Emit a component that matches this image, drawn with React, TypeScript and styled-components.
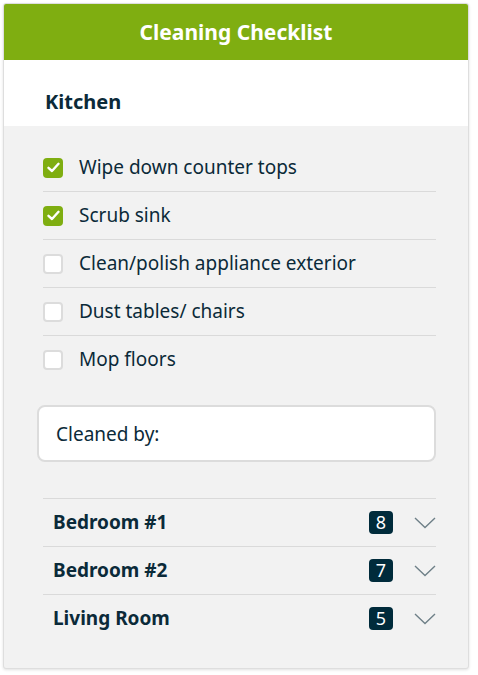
import React from "react";
import styled, { createGlobalStyle } from "styled-components";

const Global = createGlobalStyle`
  html, body { margin: 0; padding: 0; background: #ffffff; }
  body { font-family: "Noto Sans", "Open Sans", sans-serif; color: #0b2a39; }
`;

const Page = styled.div`
  padding: 3px 8px 8px 3px;
`;

const Card = styled.div`
  width: 466px;
  box-sizing: border-box;
  border: 1px solid #dedede;
  border-radius: 3px;
  box-shadow: 0 1px 3px rgba(0, 0, 0, 0.12);
  background: #f2f2f2;
  overflow: hidden;
`;

const Header = styled.div`
  height: 56px;
  background: #7fae11;
  color: #ffffff;
  display: flex;
  align-items: center;
  justify-content: center;
  font-size: 21px;
  font-weight: 700;
`;

const Section = styled.div`
  background: #ffffff;
  padding: 28px 40px 11px 41px;
  font-size: 20px;
  font-weight: 700;
  line-height: 27px;
`;

const Body = styled.div`
  padding: 18px 32px 26px 39px;
`;

const List = styled.div`
  display: flex;
  flex-direction: column;
`;

const Item = styled.label`
  display: flex;
  align-items: center;
  gap: 16px;
  padding: 11px 0;
  line-height: 25px;
  font-size: 19px;
  & + & { border-top: 1px solid #dadada; }
`;

const Box = styled.span<{ $checked: boolean }>`
  width: 20px;
  height: 20px;
  box-sizing: border-box;
  border-radius: 4px;
  flex: none;
  display: flex;
  align-items: center;
  justify-content: center;
  background: ${(p) => (p.$checked ? "#7fae11" : "#ffffff")};
  border: ${(p) => (p.$checked ? "none" : "2px solid #dcdcdc")};
`;

const Field = styled.div`
  margin: 22px 0 36px -6px;
  height: 57px;
  box-sizing: border-box;
  border: 2px solid #dcdcdc;
  border-radius: 8px;
  background: #ffffff;
  display: flex;
  align-items: center;
  padding: 0 17px;
  font-size: 19px;
`;

const Accordion = styled.div`
  display: flex;
  flex-direction: column;
`;

const Panel = styled.div`
  display: flex;
  align-items: center;
  border-top: 1px solid #dadada;
  padding: 11px 0 11px 10px;
  line-height: 25px;
`;

const PanelTitle = styled.span`
  flex: 1;
  font-size: 19px;
  font-weight: 700;
`;

const Badge = styled.span`
  width: 24px;
  height: 23px;
  border-radius: 4px;
  background: #002b3b;
  color: #ffffff;
  font-size: 18px;
  line-height: 23px;
  text-align: center;
  margin-right: 21px;
`;

const Check = () => (
  <svg width="13" height="11" viewBox="0 0 13 11" fill="none">
    <path d="M1.5 5.8 L5 9 L11.5 1.8" stroke="#ffffff" strokeWidth="2.4" strokeLinecap="round" strokeLinejoin="round" />
  </svg>
);

const Chevron = () => (
  <svg width="22" height="12" viewBox="0 0 22 12" fill="none">
    <path d="M1 1 L11 10.5 L21 1" stroke="#6f8088" strokeWidth="1.4" />
  </svg>
);

const items = [
  { label: "Wipe down counter tops", checked: true },
  { label: "Scrub sink", checked: true },
  { label: "Clean/polish appliance exterior", checked: false },
  { label: "Dust tables/ chairs", checked: false },
  { label: "Mop floors", checked: false },
];

const rooms = [
  { name: "Bedroom #1", count: 8 },
  { name: "Bedroom #2", count: 7 },
  { name: "Living Room", count: 5 },
];

export default function App() {
  return (
    <>
      <Global />
      <Page>
        <Card>
          <Header>Cleaning Checklist</Header>
          <Section>Kitchen</Section>
          <Body>
            <List>
              {items.map((it) => (
                <Item key={it.label}>
                  <Box $checked={it.checked}>{it.checked && <Check />}</Box>
                  {it.label}
                </Item>
              ))}
            </List>
            <Field>Cleaned by:</Field>
            <Accordion>
              {rooms.map((r) => (
                <Panel key={r.name}>
                  <PanelTitle>{r.name}</PanelTitle>
                  <Badge>{r.count}</Badge>
                  <Chevron />
                </Panel>
              ))}
            </Accordion>
          </Body>
        </Card>
      </Page>
    </>
  );
}
